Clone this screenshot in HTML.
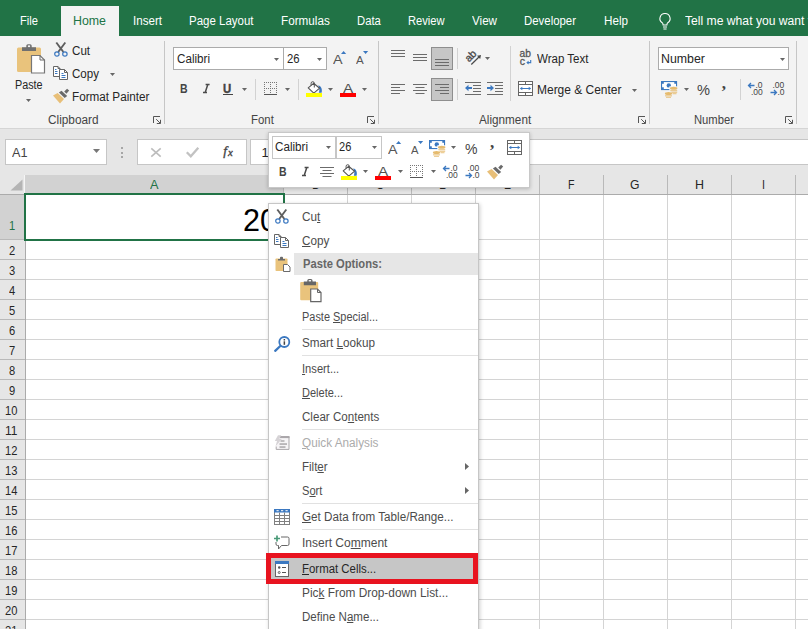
<!DOCTYPE html>
<html><head><meta charset="utf-8">
<style>
*{box-sizing:border-box;margin:0;padding:0}
html,body{width:808px;height:629px;overflow:hidden;background:#fff}
body{font-family:"Liberation Sans",sans-serif;font-size:12px;color:#262626;position:relative}
.a{position:absolute}
.t{position:absolute;white-space:nowrap;line-height:16px;height:16px;transform-origin:0 50%}
u{text-decoration:underline;text-underline-offset:0.600px;text-decoration-thickness:1px}
svg{overflow:visible}
</style></head><body>
<div class="a" style="left:0px;top:0px;width:808px;height:36px;background:#217346;"></div>
<div class="a" style="left:61px;top:6px;width:58px;height:30px;background:#f3f3f3;"></div>
<div class="t" style="left:20.0px;top:12.87px;font-size:12.5px;color:#fff;transform:scaleX(0.8930);">File</div>
<div class="t" style="left:73.0px;top:12.87px;font-size:12.5px;color:#217346;transform:scaleX(0.9897);">Home</div>
<div class="t" style="left:132.8px;top:12.87px;font-size:12.5px;color:#fff;transform:scaleX(0.9275);">Insert</div>
<div class="t" style="left:189.0px;top:12.87px;font-size:12.5px;color:#fff;transform:scaleX(0.9188);">Page Layout</div>
<div class="t" style="left:281.0px;top:12.87px;font-size:12.5px;color:#fff;transform:scaleX(0.9368);">Formulas</div>
<div class="t" style="left:356.8px;top:12.87px;font-size:12.5px;color:#fff;transform:scaleX(0.9013);">Data</div>
<div class="t" style="left:407.8px;top:12.87px;font-size:12.5px;color:#fff;transform:scaleX(0.8927);">Review</div>
<div class="t" style="left:471.5px;top:12.87px;font-size:12.5px;color:#fff;transform:scaleX(0.9302);">View</div>
<div class="t" style="left:524.0px;top:12.87px;font-size:12.5px;color:#fff;transform:scaleX(0.9125);">Developer</div>
<div class="t" style="left:604.0px;top:12.87px;font-size:12.5px;color:#fff;transform:scaleX(0.9332);">Help</div>
<div class="t" style="left:684.5px;top:12.87px;font-size:12.5px;color:#fff;transform:scaleX(0.9717);">Tell me what you want to</div>
<svg class="a" style="left:657px;top:12px" width="16" height="19" viewBox="0 0 16 19"><path d="M8 1.500a5 5 0 0 0-2.800 9.200c.7.600.9 1.400.9 2.300h3.800c0-.9.200-1.700.9-2.300A5 5 0 0 0 8 1.500zM6 15h4M6.400 17h3.200" fill="none" stroke="#fff" stroke-width="1.100"/></svg>
<div class="a" style="left:0px;top:36px;width:808px;height:92px;background:#f3f3f3;"></div>
<div class="a" style="left:0px;top:128px;width:808px;height:1px;background:#d5d5d5;"></div>
<div class="a" style="left:164px;top:41px;width:1px;height:83px;background:#c6c6c6;"></div>
<div class="a" style="left:378px;top:41px;width:1px;height:83px;background:#c6c6c6;"></div>
<div class="a" style="left:649px;top:41px;width:1px;height:83px;background:#c6c6c6;"></div>
<div class="a" style="left:796px;top:41px;width:1px;height:83px;background:#c6c6c6;"></div>
<svg class="a" style="left:16px;top:43px" width="30" height="32" viewBox="0 0 30 32"><rect x="1" y="4.500" width="24" height="24.500" rx="1.500" fill="#e9c37c"/><path d="M6 8V4.200h4.300V2.800a1.600 1.600 0 0 1 1.600-1.600h2.200a1.600 1.600 0 0 1 1.600 1.600V4.200H20V8z" fill="#707070"/><rect x="11.900" y="2.400" width="2.200" height="1.700" fill="#f3f3f3"/><path d="M15.500 12.500h8.500l4.500 4.500v13h-13z" fill="#fff" stroke="#777" stroke-width="1.200"/><path d="M24 12.500v4.500h4.500" fill="none" stroke="#6b6b6b" stroke-width="1"/></svg>
<div class="t" style="left:15.2px;top:77.04px;font-size:12px;color:#262626;transform:scaleX(0.8994);">Paste</div>
<svg class="a" style="left:26px;top:99px" width="5" height="3" viewBox="0 0 5 3"><path d="M0 0h5L2.500 3z" fill="#666"/></svg>
<svg class="a" style="left:53px;top:42px" width="16" height="16" viewBox="0 0 16 16"><path d="M3.300 0.500L10.400 10M12.300 0.500L5.200 10" stroke="#5e5e5e" stroke-width="1.900" fill="none" stroke-linecap="butt"/><circle cx="3.900" cy="12" r="2.200" fill="none" stroke="#3b78c0" stroke-width="1.200"/><circle cx="11.900" cy="12" r="2.200" fill="none" stroke="#3b78c0" stroke-width="1.200"/></svg>
<div class="t" style="left:72.2px;top:43.04px;font-size:12px;color:#262626;transform:scaleX(0.9686);">Cut</div>
<svg class="a" style="left:53px;top:66px" width="16" height="15" viewBox="0 0 16 15"><path d="M0.500 0.500h4.500l2 2v8h-6.500z" fill="#fff" stroke="#666" stroke-width="1"/><path d="M5 0.500v2h2" fill="none" stroke="#666" stroke-width="1"/><path d="M2 3.500h1.500M2 5.500h2.500M2 7.500h2.500" stroke="#3b78c0" stroke-width="1"/><path d="M6.500 3.500h5l3 3v7h-8z" fill="#fff" stroke="#666" stroke-width="1"/><path d="M11.500 3.500v3h3" fill="none" stroke="#666" stroke-width="1"/><path d="M8.500 7.500h2M8.500 9.500h4M8.500 11.500h4" stroke="#3b78c0" stroke-width="1"/></svg>
<div class="t" style="left:72.2px;top:66.04px;font-size:12px;color:#262626;transform:scaleX(0.9637);">Copy</div>
<svg class="a" style="left:110px;top:72.5px" width="5" height="3" viewBox="0 0 5 3"><path d="M0 0h5L2.500 3z" fill="#666"/></svg>
<svg class="a" style="left:53px;top:87.7px" width="17" height="16" viewBox="0 0 17 16"><path d="M0 7.400L4.600 5.100 11 11 7 15.400z" fill="#e8bf78"/><path d="M5.900 4.400L8.500 2.700 14.200 7.900 11.700 10.100z" fill="#6a6a6a"/><path d="M11.200 3.500L14.100 0.800 16.200 2.600 13.400 5.700z" fill="#6a6a6a"/></svg>
<div class="t" style="left:72.2px;top:89.04px;font-size:12px;color:#262626;transform:scaleX(0.9766);">Format Painter</div>
<div class="t" style="left:48.2px;top:112.04px;font-size:12px;color:#444;transform:scaleX(0.9830);">Clipboard</div>
<svg class="a" style="left:153px;top:116px" width="8" height="8" viewBox="0 0 8 8"><path d="M0.500 7V0.500H7M3.200 3.200l4 4M7.500 3.800v3.700h-3.700" fill="none" stroke="#555" stroke-width="1"/></svg>
<div class="a" style="left:173px;top:47px;width:111px;height:23px;background:#fff;border:1px solid #ababab"></div>
<div class="a" style="left:283px;top:47px;width:44px;height:23px;background:#fff;border:1px solid #ababab"></div>
<div class="t" style="left:176.5px;top:51.04px;font-size:12px;color:#262626;transform:scaleX(0.9701);">Calibri</div>
<svg class="a" style="left:274px;top:58px" width="5" height="3" viewBox="0 0 5 3"><path d="M0 0h5L2.500 3z" fill="#666"/></svg>
<div class="t" style="left:286.5px;top:51.04px;font-size:12px;color:#262626;transform:scaleX(0.9432);">26</div>
<svg class="a" style="left:317px;top:58px" width="5" height="3" viewBox="0 0 5 3"><path d="M0 0h5L2.500 3z" fill="#666"/></svg>
<div class="t" style="left:332.7px;top:51.52px;font-size:13.5px;color:#555;transform:scaleX(1.0648);">A</div>
<svg class="a" style="left:341px;top:50.7px" width="5.2" height="3.1" viewBox="0 0 5.2 3.1"><path d="M0 3.100h5.200L2.600 0z" fill="#3b78c0"/></svg>
<div class="t" style="left:355.7px;top:52.02px;font-size:11.2px;color:#555;transform:scaleX(1.0310);">A</div>
<svg class="a" style="left:362.8px;top:51px" width="5.2" height="3.1" viewBox="0 0 5.2 3.1"><path d="M0 0h5.200L2.600 3.100z" fill="#3b78c0"/></svg>
<div class="t" style="left:179.5px;top:80.87px;font-size:12.5px;color:#444;transform:scaleX(0.8415);font-weight:bold;">B</div>
<svg class="a" style="left:201.5px;top:84px" width="8" height="9" viewBox="0 0 8 9"><path d="M5.800 0.600L3.200 8.400M3.600 0.600h4M1 8.400h4" fill="none" stroke="#4a4a4a" stroke-width="1.500"/></svg>
<div class="t" style="left:223.2px;top:81.04px;font-size:12px;color:#444;transform:scaleX(0.9456);font-weight:bold;-webkit-text-stroke:0.4px #444;">U</div>
<div class="a" style="left:223px;top:94px;width:10px;height:1px;background:#444;"></div>
<svg class="a" style="left:242px;top:88px" width="5" height="3" viewBox="0 0 5 3"><path d="M0 0h5L2.500 3z" fill="#666"/></svg>
<div class="a" style="left:255px;top:79px;width:1px;height:21px;background:#d2d2d2;"></div>
<svg class="a" style="left:264px;top:82px" width="13" height="13" viewBox="0 0 13 13"><g fill="#777"><rect x="0" y="0" width="1" height="1"/><rect x="0" y="12" width="1" height="1"/><rect x="0" y="0" width="1" height="1"/><rect x="12" y="0" width="1" height="1"/><rect x="6" y="0" width="1" height="1"/><rect x="0" y="6" width="1" height="1"/><rect x="2" y="0" width="1" height="1"/><rect x="2" y="12" width="1" height="1"/><rect x="0" y="2" width="1" height="1"/><rect x="12" y="2" width="1" height="1"/><rect x="6" y="2" width="1" height="1"/><rect x="2" y="6" width="1" height="1"/><rect x="4" y="0" width="1" height="1"/><rect x="4" y="12" width="1" height="1"/><rect x="0" y="4" width="1" height="1"/><rect x="12" y="4" width="1" height="1"/><rect x="6" y="4" width="1" height="1"/><rect x="4" y="6" width="1" height="1"/><rect x="6" y="0" width="1" height="1"/><rect x="6" y="12" width="1" height="1"/><rect x="0" y="6" width="1" height="1"/><rect x="12" y="6" width="1" height="1"/><rect x="6" y="6" width="1" height="1"/><rect x="6" y="6" width="1" height="1"/><rect x="8" y="0" width="1" height="1"/><rect x="8" y="12" width="1" height="1"/><rect x="0" y="8" width="1" height="1"/><rect x="12" y="8" width="1" height="1"/><rect x="6" y="8" width="1" height="1"/><rect x="8" y="6" width="1" height="1"/><rect x="10" y="0" width="1" height="1"/><rect x="10" y="12" width="1" height="1"/><rect x="0" y="10" width="1" height="1"/><rect x="12" y="10" width="1" height="1"/><rect x="6" y="10" width="1" height="1"/><rect x="10" y="6" width="1" height="1"/><rect x="12" y="0" width="1" height="1"/><rect x="12" y="12" width="1" height="1"/><rect x="0" y="12" width="1" height="1"/><rect x="12" y="12" width="1" height="1"/><rect x="6" y="12" width="1" height="1"/><rect x="12" y="6" width="1" height="1"/></g><rect x="0" y="12" width="13" height="1" fill="#555"/></svg>
<svg class="a" style="left:285px;top:88px" width="5" height="3" viewBox="0 0 5 3"><path d="M0 0h5L2.500 3z" fill="#666"/></svg>
<div class="a" style="left:298px;top:79px;width:1px;height:21px;background:#d2d2d2;"></div>
<svg class="a" style="left:306px;top:81px" width="17" height="16" viewBox="0 0 17 16"><path d="M12.300 4.200c2.800.8 4.300 3.800 3.300 7.600h-2.800c1-2.500.6-5-.5-7.600z" fill="#3b78c0"/><path d="M7.600 2.300L2.200 6.900l5.600 5.300 5.800-5z" fill="#fff" stroke="#555" stroke-width="1.100" stroke-linejoin="round"/><path d="M8.300 6.500V2.300a1.600 1.600 0 0 0-3.200 0v2" fill="none" stroke="#555" stroke-width="1"/><rect x="0" y="12" width="16" height="4" fill="#ffff00"/></svg>
<svg class="a" style="left:328px;top:88px" width="5" height="3" viewBox="0 0 5 3"><path d="M0 0h5L2.500 3z" fill="#666"/></svg>
<svg class="a" style="left:340px;top:83px" width="16" height="14" viewBox="0 0 16 14"><rect x="0" y="10" width="16" height="4" fill="#f00"/></svg>
<div class="t" style="left:342.9px;top:80.52px;font-size:13.5px;color:#505050;transform:scaleX(1.1314);">A</div>
<svg class="a" style="left:362px;top:88px" width="5" height="3" viewBox="0 0 5 3"><path d="M0 0h5L2.500 3z" fill="#666"/></svg>
<div class="t" style="left:251.0px;top:112.04px;font-size:12px;color:#444;transform:scaleX(0.9494);">Font</div>
<svg class="a" style="left:367px;top:116px" width="8" height="8" viewBox="0 0 8 8"><path d="M0.500 7V0.500H7M3.200 3.200l4 4M7.500 3.800v3.700h-3.700" fill="none" stroke="#555" stroke-width="1"/></svg>
<svg class="a" style="left:391px;top:50px" width="14" height="9" viewBox="0 0 14 9"><g fill="#6b6b6b"><rect x="0" y="0" width="14" height="1"/><rect x="0" y="3" width="14" height="1"/><rect x="0" y="6" width="14" height="1"/></g></svg>
<svg class="a" style="left:413px;top:54px" width="14" height="9" viewBox="0 0 14 9"><g fill="#6b6b6b"><rect x="0" y="0" width="14" height="1"/><rect x="0" y="3" width="14" height="1"/><rect x="0" y="6" width="14" height="1"/></g></svg>
<div class="a" style="left:431px;top:47px;width:22px;height:23px;background:#c6c6c6;border:1px solid #8e8e8e"></div>
<svg class="a" style="left:435px;top:59px" width="14" height="9" viewBox="0 0 14 9"><g fill="#6b6b6b"><rect x="0" y="0" width="14" height="1"/><rect x="0" y="3" width="14" height="1"/><rect x="0" y="6" width="14" height="1"/></g></svg>
<div class="a" style="left:457px;top:48px;width:1px;height:21px;background:#d2d2d2;"></div>
<svg class="a" style="left:465px;top:49px" width="17" height="17" viewBox="0 0 17 17"><text x="5.500" y="10.500" font-size="10.500" font-family="Liberation Sans" fill="#4a4a4a" stroke="#4a4a4a" stroke-width=".35" text-anchor="middle" transform="rotate(-45 5.500 6.900)">ab</text><path d="M6.300 15.500L14.500 7.500" fill="none" stroke="#4a4a4a" stroke-width="1.200"/><path d="M16 6l-4 .8 3.200 3.200z" fill="#4a4a4a"/></svg>
<svg class="a" style="left:485px;top:57px" width="5" height="3" viewBox="0 0 5 3"><path d="M0 0h5L2.500 3z" fill="#666"/></svg>
<div class="a" style="left:510px;top:46px;width:1px;height:55px;background:#d2d2d2;"></div>
<svg class="a" style="left:391px;top:84px" width="14" height="12" viewBox="0 0 14 12"><g fill="#6b6b6b"><rect x="0" y="0" width="14" height="1"/><rect x="0" y="3" width="9" height="1"/><rect x="0" y="6" width="14" height="1"/><rect x="0" y="9" width="9" height="1"/></g></svg>
<svg class="a" style="left:413px;top:84px" width="14" height="12" viewBox="0 0 14 12"><g fill="#6b6b6b"><rect x="0" y="0" width="14" height="1"/><rect x="2.5" y="3" width="9" height="1"/><rect x="0" y="6" width="14" height="1"/><rect x="2.5" y="9" width="9" height="1"/></g></svg>
<div class="a" style="left:431px;top:78px;width:22px;height:23px;background:#c6c6c6;border:1px solid #8e8e8e"></div>
<svg class="a" style="left:435px;top:84px" width="14" height="12" viewBox="0 0 14 12"><g fill="#6b6b6b"><rect x="0" y="0" width="14" height="1"/><rect x="5" y="3" width="9" height="1"/><rect x="0" y="6" width="14" height="1"/><rect x="5" y="9" width="9" height="1"/></g></svg>
<div class="a" style="left:457px;top:79px;width:1px;height:21px;background:#d2d2d2;"></div>
<svg class="a" style="left:465px;top:82px" width="16" height="13" viewBox="0 0 16 13"><g fill="#6b6b6b"><rect x="0" y="0" width="16" height="1"/><rect x="0" y="12" width="16" height="1"/><rect x="8" y="3" width="8" height="1"/><rect x="8" y="6" width="8" height="1"/><rect x="8" y="9" width="8" height="1"/></g><path d="M0 6L3.500 2.800V5H7V7H3.500V9.200z" fill="#3b78c0"/></svg>
<svg class="a" style="left:487px;top:82px" width="16" height="13" viewBox="0 0 16 13"><g fill="#6b6b6b"><rect x="0" y="0" width="16" height="1"/><rect x="0" y="12" width="16" height="1"/><rect x="8" y="3" width="8" height="1"/><rect x="8" y="6" width="8" height="1"/><rect x="8" y="9" width="8" height="1"/></g><path d="M7 6L3.500 2.800V5H0V7H3.500V9.200z" fill="#3b78c0"/></svg>
<svg class="a" style="left:519px;top:50px" width="14" height="16" viewBox="0 0 14 16"><text x="0.600" y="7.400" font-size="10.500" font-family="Liberation Sans" fill="#555" stroke="#555" stroke-width=".3" textLength="11.400" lengthAdjust="spacingAndGlyphs">ab</text><text x="0.700" y="14.700" font-size="10.500" font-family="Liberation Sans" fill="#555" stroke="#555" stroke-width=".3">c</text><path d="M11.700 10v2.600H8" fill="none" stroke="#3b78c0" stroke-width="1.100"/><path d="M7.300 12.600L9.600 10.800V14.400z" fill="#3b78c0"/></svg>
<div class="t" style="left:537.0px;top:51.04px;font-size:12px;color:#262626;transform:scaleX(0.9612);">Wrap Text</div>
<svg class="a" style="left:518px;top:81px" width="15" height="15" viewBox="0 0 15 15"><rect x="0.500" y="0.500" width="14" height="14" fill="#fff" stroke="#666"/><path d="M0.500 3.500h14M0.500 11.500h14M7.500 0.500v3M7.500 11.500v3" stroke="#666" fill="none"/><path d="M3 7.500h9" fill="none" stroke="#3b78c0" stroke-width="1"/><path d="M1.800 7.500L4.300 5.700V9.300zM13.200 7.500L10.700 5.700V9.300z" fill="#3b78c0"/></svg>
<div class="t" style="left:537.0px;top:82.04px;font-size:12px;color:#262626;transform:scaleX(0.9976);">Merge &amp; Center</div>
<svg class="a" style="left:632px;top:88.5px" width="5" height="3" viewBox="0 0 5 3"><path d="M0 0h5L2.500 3z" fill="#666"/></svg>
<div class="t" style="left:478.8px;top:112.04px;font-size:12px;color:#444;transform:scaleX(0.9780);">Alignment</div>
<svg class="a" style="left:638px;top:116px" width="8" height="8" viewBox="0 0 8 8"><path d="M0.500 7V0.500H7M3.200 3.200l4 4M7.500 3.800v3.700h-3.700" fill="none" stroke="#555" stroke-width="1"/></svg>
<div class="a" style="left:658px;top:47px;width:131px;height:23px;background:#fff;border:1px solid #ababab"></div>
<div class="t" style="left:661.0px;top:51.04px;font-size:12px;color:#262626;transform:scaleX(1.0307);">Number</div>
<svg class="a" style="left:779.5px;top:57.5px" width="5" height="3" viewBox="0 0 5 3"><path d="M0 0h5L2.500 3z" fill="#666"/></svg>
<svg class="a" style="left:661px;top:81.2px" width="17" height="17" viewBox="0 0 17 17"><rect x="0.550" y="0.550" width="15" height="8" fill="#fff" stroke="#3b78c0" stroke-width="1.100"/><g fill="#3b78c0"><rect x="1" y="1" width="1.800" height="1.800"/><rect x="13.300" y="1" width="1.800" height="1.800"/><rect x="1" y="6.300" width="1.800" height="1.800"/><circle cx="7.800" cy="4.400" r="2.200"/></g><rect x="8.300" y="5.300" width="9" height="4.500" fill="#f3f3f3"/><g fill="#e6bb6e"><ellipse cx="12.700" cy="7.300" rx="3.700" ry="1.500"/><rect x="9.300" y="9.300" width="6.900" height=".9"/><rect x="10.500" y="10.800" width="5.700" height=".9"/><rect x="11.500" y="12.300" width="4" height=".9"/><ellipse cx="7.500" cy="12.400" rx="3.600" ry="1.500"/><rect x="4" y="14.400" width="7" height=".9"/><rect x="5" y="15.800" width="5" height=".9"/></g></svg>
<svg class="a" style="left:683.5px;top:88px" width="5" height="3" viewBox="0 0 5 3"><path d="M0 0h5L2.500 3z" fill="#666"/></svg>
<div class="t" style="left:696.5px;top:82.00px;font-size:15px;color:#444;transform:scaleX(0.9742);">%</div>
<div class="t" style="left:721.8px;top:76.31px;font-size:17px;color:#444;font-weight:bold;font-family:'Liberation Serif',sans-serif;">,</div>
<div class="a" style="left:740px;top:79px;width:1px;height:21px;background:#d2d2d2;"></div>
<svg class="a" style="left:748px;top:82px" width="15" height="13" viewBox="0 0 15 13"><path d="M0.500 3.500h6M3 1L0.500 3.500 3 6" fill="none" stroke="#3b78c0" stroke-width="1.300"/><text x="7.500" y="6" font-size="8.500" font-family="Liberation Sans" fill="#444">.0</text><text x="3" y="13.300" font-size="8.500" font-family="Liberation Sans" fill="#444">.00</text></svg>
<svg class="a" style="left:770px;top:82px" width="15" height="13" viewBox="0 0 15 13"><text x="2.500" y="6" font-size="8.500" font-family="Liberation Sans" fill="#444">.00</text><path d="M0.500 10.500h6M4 8l2.500 2.500L4 13" fill="none" stroke="#3b78c0" stroke-width="1.300"/><text x="7.500" y="13.300" font-size="8.500" font-family="Liberation Sans" fill="#444">.0</text></svg>
<div class="t" style="left:694.2px;top:112.04px;font-size:12px;color:#444;transform:scaleX(0.9370);">Number</div>
<svg class="a" style="left:785px;top:116px" width="8" height="8" viewBox="0 0 8 8"><path d="M0.500 7V0.500H7M3.200 3.200l4 4M7.500 3.800v3.700h-3.700" fill="none" stroke="#555" stroke-width="1"/></svg>
<div class="a" style="left:0px;top:129px;width:808px;height:46px;background:#e6e6e6;"></div>
<div class="a" style="left:5px;top:139px;width:102px;height:26px;background:#fff;border:1px solid #c6c6c6"></div>
<div class="t" style="left:11.8px;top:144.70px;font-size:13px;color:#444;transform:scaleX(0.9745);">A1</div>
<svg class="a" style="left:93px;top:149px" width="7" height="4" viewBox="0 0 7 4"><path d="M0 0h7L3.500 4z" fill="#777"/></svg>
<div class="a" style="left:121px;top:147px;width:2px;height:2px;background:#a6a6a6;"></div>
<div class="a" style="left:121px;top:151.5px;width:2px;height:2px;background:#a6a6a6;"></div>
<div class="a" style="left:121px;top:156px;width:2px;height:2px;background:#a6a6a6;"></div>
<div class="a" style="left:137px;top:139px;width:110px;height:26px;background:#fff;border:1px solid #c6c6c6"></div>
<svg class="a" style="left:151px;top:147.5px" width="10" height="9" viewBox="0 0 10 9"><path d="M0.300 0.300l9.400 8.400M9.700 0.300l-9.400 8.400" stroke="#bcbcbc" stroke-width="1.600" fill="none"/></svg>
<svg class="a" style="left:186px;top:147px" width="13" height="10" viewBox="0 0 13 10"><path d="M0.800 5.300l4 4L12.300 0.800" stroke="#c2c2c2" stroke-width="2.300" fill="none"/></svg>
<div class="t" style="left:223.3px;top:142.52px;font-size:13.5px;color:#444;font-style:italic;-webkit-text-stroke:0.35px #444;font-family:'Liberation Serif',sans-serif;">f</div>
<div class="t" style="left:228.0px;top:144.29px;font-size:10.7px;color:#444;font-style:italic;-webkit-text-stroke:0.35px #444;font-family:'Liberation Serif',sans-serif;">x</div>
<div class="a" style="left:250px;top:139px;width:560px;height:26px;background:#fff;border:1px solid #c6c6c6"></div>
<div class="t" style="left:261.5px;top:144.70px;font-size:13px;color:#262626;">1</div>
<div class="a" style="left:0px;top:175px;width:808px;height:454px;background:#fff;"></div>
<div class="a" style="left:0px;top:175px;width:808px;height:19px;background:#e6e6e6;"></div>
<div class="a" style="left:0px;top:194px;width:808px;height:1px;background:#ababab;"></div>
<svg class="a" style="left:10px;top:179px" width="13" height="12" viewBox="0 0 13 12"><path d="M12.500 0.500V11.500H0.500z" fill="#b4b4b4"/></svg>
<div class="a" style="left:24px;top:175px;width:1px;height:19px;background:#f5f5f5;"></div>
<div class="a" style="left:25px;top:175px;width:258px;height:19px;background:#d2d2d2;"></div>
<div class="t" style="left:149.5px;top:176.70px;font-size:13px;color:#217346;transform:scaleX(0.9802);">A</div>
<div class="a" style="left:283px;top:175px;width:1px;height:19px;background:#b9b9b9;"></div>
<div class="a" style="left:283px;top:195px;width:1px;height:440px;background:#d4d4d4;"></div>
<div class="a" style="left:347px;top:175px;width:1px;height:19px;background:#b9b9b9;"></div>
<div class="a" style="left:347px;top:195px;width:1px;height:440px;background:#d4d4d4;"></div>
<div class="a" style="left:411px;top:175px;width:1px;height:19px;background:#b9b9b9;"></div>
<div class="a" style="left:411px;top:195px;width:1px;height:440px;background:#d4d4d4;"></div>
<div class="a" style="left:475px;top:175px;width:1px;height:19px;background:#b9b9b9;"></div>
<div class="a" style="left:475px;top:195px;width:1px;height:440px;background:#d4d4d4;"></div>
<div class="a" style="left:539px;top:175px;width:1px;height:19px;background:#b9b9b9;"></div>
<div class="a" style="left:539px;top:195px;width:1px;height:440px;background:#d4d4d4;"></div>
<div class="a" style="left:603px;top:175px;width:1px;height:19px;background:#b9b9b9;"></div>
<div class="a" style="left:603px;top:195px;width:1px;height:440px;background:#d4d4d4;"></div>
<div class="a" style="left:667px;top:175px;width:1px;height:19px;background:#b9b9b9;"></div>
<div class="a" style="left:667px;top:195px;width:1px;height:440px;background:#d4d4d4;"></div>
<div class="a" style="left:731px;top:175px;width:1px;height:19px;background:#b9b9b9;"></div>
<div class="a" style="left:731px;top:195px;width:1px;height:440px;background:#d4d4d4;"></div>
<div class="a" style="left:795px;top:175px;width:1px;height:19px;background:#b9b9b9;"></div>
<div class="a" style="left:795px;top:195px;width:1px;height:440px;background:#d4d4d4;"></div>
<div class="t" style="left:311.5px;top:176.70px;font-size:13px;color:#262626;transform:scaleX(0.8649);">B</div>
<div class="t" style="left:375.5px;top:176.70px;font-size:13px;color:#262626;transform:scaleX(0.8519);">C</div>
<div class="t" style="left:439.0px;top:176.70px;font-size:13px;color:#262626;transform:scaleX(0.9584);">D</div>
<div class="t" style="left:504.0px;top:176.70px;font-size:13px;color:#262626;transform:scaleX(0.8072);">E</div>
<div class="t" style="left:568.0px;top:176.70px;font-size:13px;color:#262626;transform:scaleX(0.8173);">F</div>
<div class="t" style="left:630.0px;top:176.70px;font-size:13px;color:#262626;transform:scaleX(0.9383);">G</div>
<div class="t" style="left:694.5px;top:176.70px;font-size:13px;color:#262626;transform:scaleX(0.9584);">H</div>
<div class="t" style="left:761.5px;top:176.70px;font-size:13px;color:#262626;transform:scaleX(0.8276);">I</div>
<div class="a" style="left:0px;top:195px;width:25px;height:440px;background:#e6e6e6;"></div>
<div class="a" style="left:25px;top:195px;width:1px;height:440px;background:#ababab;"></div>
<div class="a" style="left:0px;top:195px;width:25px;height:45px;background:#d2d2d2;"></div>
<div class="t" style="left:9.0px;top:217.70px;font-size:13px;color:#217346;transform:scaleX(0.8570);">1</div>
<div class="a" style="left:0px;top:239px;width:25px;height:1px;background:#b9b9b9;"></div>
<div class="a" style="left:26px;top:239px;width:790px;height:1px;background:#d4d4d4;"></div>
<div class="t" style="left:9.0px;top:242.90px;font-size:13px;color:#262626;transform:scaleX(0.8570);">2</div>
<div class="a" style="left:0px;top:259px;width:25px;height:1px;background:#b9b9b9;"></div>
<div class="a" style="left:26px;top:259px;width:790px;height:1px;background:#d4d4d4;"></div>
<div class="t" style="left:9.0px;top:262.90px;font-size:13px;color:#262626;transform:scaleX(0.8570);">3</div>
<div class="a" style="left:0px;top:279px;width:25px;height:1px;background:#b9b9b9;"></div>
<div class="a" style="left:26px;top:279px;width:790px;height:1px;background:#d4d4d4;"></div>
<div class="t" style="left:9.0px;top:282.90px;font-size:13px;color:#262626;transform:scaleX(0.8570);">4</div>
<div class="a" style="left:0px;top:299px;width:25px;height:1px;background:#b9b9b9;"></div>
<div class="a" style="left:26px;top:299px;width:790px;height:1px;background:#d4d4d4;"></div>
<div class="t" style="left:9.0px;top:302.90px;font-size:13px;color:#262626;transform:scaleX(0.8570);">5</div>
<div class="a" style="left:0px;top:319px;width:25px;height:1px;background:#b9b9b9;"></div>
<div class="a" style="left:26px;top:319px;width:790px;height:1px;background:#d4d4d4;"></div>
<div class="t" style="left:9.0px;top:322.90px;font-size:13px;color:#262626;transform:scaleX(0.8570);">6</div>
<div class="a" style="left:0px;top:339px;width:25px;height:1px;background:#b9b9b9;"></div>
<div class="a" style="left:26px;top:339px;width:790px;height:1px;background:#d4d4d4;"></div>
<div class="t" style="left:9.0px;top:342.90px;font-size:13px;color:#262626;transform:scaleX(0.8570);">7</div>
<div class="a" style="left:0px;top:359px;width:25px;height:1px;background:#b9b9b9;"></div>
<div class="a" style="left:26px;top:359px;width:790px;height:1px;background:#d4d4d4;"></div>
<div class="t" style="left:9.0px;top:362.90px;font-size:13px;color:#262626;transform:scaleX(0.8570);">8</div>
<div class="a" style="left:0px;top:379px;width:25px;height:1px;background:#b9b9b9;"></div>
<div class="a" style="left:26px;top:379px;width:790px;height:1px;background:#d4d4d4;"></div>
<div class="t" style="left:9.0px;top:382.90px;font-size:13px;color:#262626;transform:scaleX(0.8570);">9</div>
<div class="a" style="left:0px;top:399px;width:25px;height:1px;background:#b9b9b9;"></div>
<div class="a" style="left:26px;top:399px;width:790px;height:1px;background:#d4d4d4;"></div>
<div class="t" style="left:5.0px;top:402.90px;font-size:13px;color:#262626;transform:scaleX(0.8570);">10</div>
<div class="a" style="left:0px;top:419px;width:25px;height:1px;background:#b9b9b9;"></div>
<div class="a" style="left:26px;top:419px;width:790px;height:1px;background:#d4d4d4;"></div>
<div class="t" style="left:5.0px;top:422.90px;font-size:13px;color:#262626;transform:scaleX(0.9185);">11</div>
<div class="a" style="left:0px;top:439px;width:25px;height:1px;background:#b9b9b9;"></div>
<div class="a" style="left:26px;top:439px;width:790px;height:1px;background:#d4d4d4;"></div>
<div class="t" style="left:5.0px;top:442.90px;font-size:13px;color:#262626;transform:scaleX(0.8570);">12</div>
<div class="a" style="left:0px;top:459px;width:25px;height:1px;background:#b9b9b9;"></div>
<div class="a" style="left:26px;top:459px;width:790px;height:1px;background:#d4d4d4;"></div>
<div class="t" style="left:5.0px;top:462.90px;font-size:13px;color:#262626;transform:scaleX(0.8570);">13</div>
<div class="a" style="left:0px;top:479px;width:25px;height:1px;background:#b9b9b9;"></div>
<div class="a" style="left:26px;top:479px;width:790px;height:1px;background:#d4d4d4;"></div>
<div class="t" style="left:5.0px;top:482.90px;font-size:13px;color:#262626;transform:scaleX(0.8570);">14</div>
<div class="a" style="left:0px;top:499px;width:25px;height:1px;background:#b9b9b9;"></div>
<div class="a" style="left:26px;top:499px;width:790px;height:1px;background:#d4d4d4;"></div>
<div class="t" style="left:5.0px;top:502.90px;font-size:13px;color:#262626;transform:scaleX(0.8570);">15</div>
<div class="a" style="left:0px;top:519px;width:25px;height:1px;background:#b9b9b9;"></div>
<div class="a" style="left:26px;top:519px;width:790px;height:1px;background:#d4d4d4;"></div>
<div class="t" style="left:5.0px;top:522.90px;font-size:13px;color:#262626;transform:scaleX(0.8570);">16</div>
<div class="a" style="left:0px;top:539px;width:25px;height:1px;background:#b9b9b9;"></div>
<div class="a" style="left:26px;top:539px;width:790px;height:1px;background:#d4d4d4;"></div>
<div class="t" style="left:5.0px;top:542.90px;font-size:13px;color:#262626;transform:scaleX(0.8570);">17</div>
<div class="a" style="left:0px;top:559px;width:25px;height:1px;background:#b9b9b9;"></div>
<div class="a" style="left:26px;top:559px;width:790px;height:1px;background:#d4d4d4;"></div>
<div class="t" style="left:5.0px;top:562.90px;font-size:13px;color:#262626;transform:scaleX(0.8570);">18</div>
<div class="a" style="left:0px;top:579px;width:25px;height:1px;background:#b9b9b9;"></div>
<div class="a" style="left:26px;top:579px;width:790px;height:1px;background:#d4d4d4;"></div>
<div class="t" style="left:5.0px;top:582.90px;font-size:13px;color:#262626;transform:scaleX(0.8570);">19</div>
<div class="a" style="left:0px;top:599px;width:25px;height:1px;background:#b9b9b9;"></div>
<div class="a" style="left:26px;top:599px;width:790px;height:1px;background:#d4d4d4;"></div>
<div class="t" style="left:5.0px;top:602.90px;font-size:13px;color:#262626;transform:scaleX(0.8570);">20</div>
<div class="a" style="left:0px;top:619px;width:25px;height:1px;background:#b9b9b9;"></div>
<div class="a" style="left:26px;top:619px;width:790px;height:1px;background:#d4d4d4;"></div>
<div class="t" style="left:5.0px;top:622.90px;font-size:13px;color:#262626;transform:scaleX(0.8570);">21</div>
<div class="a" style="left:0px;top:639px;width:25px;height:1px;background:#b9b9b9;"></div>
<div class="a" style="left:26px;top:639px;width:790px;height:1px;background:#d4d4d4;"></div>
<div class="t" style="left:5.0px;top:642.90px;font-size:13px;color:#262626;transform:scaleX(0.8570);">22</div>
<div class="a" style="left:24px;top:193px;width:261px;height:48px;border:2px solid #217346;background:#fff"></div>
<div class="t" style="left:242.8px;top:211.63px;font-size:30.5px;color:#000;transform:scaleX(1.0018);">20</div>
<div class="a" style="left:268px;top:132px;width:262px;height:56px;background:#fff;border:1px solid #c8c8c8;box-shadow:0 1px 4px rgba(0,0,0,.22)"></div>
<div class="a" style="left:272px;top:136px;width:64px;height:23px;background:#fff;border:1px solid #c6c6c6"></div>
<div class="a" style="left:336px;top:136px;width:46px;height:23px;background:#fff;border:1px solid #c6c6c6"></div>
<div class="t" style="left:275.3px;top:139.04px;font-size:12px;color:#262626;transform:scaleX(0.9701);">Calibri</div>
<svg class="a" style="left:326px;top:146px" width="5" height="3" viewBox="0 0 5 3"><path d="M0 0h5L2.500 3z" fill="#666"/></svg>
<div class="t" style="left:338.5px;top:139.04px;font-size:12px;color:#262626;transform:scaleX(0.9207);">26</div>
<svg class="a" style="left:372px;top:146px" width="5" height="3" viewBox="0 0 5 3"><path d="M0 0h5L2.500 3z" fill="#666"/></svg>
<div class="t" style="left:388.0px;top:141.52px;font-size:13.5px;color:#555;transform:scaleX(1.0537);">A</div>
<svg class="a" style="left:396.3px;top:140.7px" width="5.2" height="3.1" viewBox="0 0 5.2 3.1"><path d="M0 3.100h5.200L2.600 0z" fill="#3b78c0"/></svg>
<div class="t" style="left:410.8px;top:142.02px;font-size:11.2px;color:#555;transform:scaleX(1.0042);">A</div>
<svg class="a" style="left:418px;top:141px" width="5.2" height="3.1" viewBox="0 0 5.2 3.1"><path d="M0 0h5.200L2.600 3.100z" fill="#3b78c0"/></svg>
<svg class="a" style="left:429px;top:139.7px" width="17" height="17" viewBox="0 0 17 17"><rect x="0.550" y="0.550" width="15" height="8" fill="#fff" stroke="#3b78c0" stroke-width="1.100"/><g fill="#3b78c0"><rect x="1" y="1" width="1.800" height="1.800"/><rect x="13.300" y="1" width="1.800" height="1.800"/><rect x="1" y="6.300" width="1.800" height="1.800"/><circle cx="7.800" cy="4.400" r="2.200"/></g><rect x="8.300" y="5.300" width="9" height="4.500" fill="#fff"/><g fill="#e6bb6e"><ellipse cx="12.700" cy="7.300" rx="3.700" ry="1.500"/><rect x="9.300" y="9.300" width="6.900" height=".9"/><rect x="10.500" y="10.800" width="5.700" height=".9"/><rect x="11.500" y="12.300" width="4" height=".9"/><ellipse cx="7.500" cy="12.400" rx="3.600" ry="1.500"/><rect x="4" y="14.400" width="7" height=".9"/><rect x="5" y="15.800" width="5" height=".9"/></g></svg>
<svg class="a" style="left:451px;top:146px" width="5" height="3" viewBox="0 0 5 3"><path d="M0 0h5L2.500 3z" fill="#666"/></svg>
<div class="t" style="left:465.0px;top:141.00px;font-size:15px;color:#444;transform:scaleX(0.9368);">%</div>
<div class="t" style="left:490.0px;top:134.81px;font-size:17px;color:#444;font-weight:bold;font-family:'Liberation Serif',sans-serif;">,</div>
<svg class="a" style="left:507px;top:140px" width="15" height="15" viewBox="0 0 15 15"><rect x="0.500" y="0.500" width="14" height="14" fill="#fff" stroke="#666"/><path d="M0.500 3.500h14M0.500 11.500h14M7.500 0.500v3M7.500 11.500v3" stroke="#666" fill="none"/><path d="M3 7.500h9" fill="none" stroke="#3b78c0" stroke-width="1"/><path d="M1.800 7.500L4.300 5.700V9.300zM13.200 7.500L10.700 5.700V9.300z" fill="#3b78c0"/></svg>
<div class="t" style="left:278.5px;top:163.87px;font-size:12.5px;color:#444;transform:scaleX(0.8415);font-weight:bold;">B</div>
<svg class="a" style="left:300.5px;top:167px" width="8" height="9" viewBox="0 0 8 9"><path d="M5.800 0.600L3.200 8.400M3.600 0.600h4M1 8.400h4" fill="none" stroke="#4a4a4a" stroke-width="1.500"/></svg>
<svg class="a" style="left:320px;top:167px" width="14" height="12" viewBox="0 0 14 12"><g fill="#6b6b6b"><rect x="0" y="0" width="14" height="1"/><rect x="2.5" y="3" width="9" height="1"/><rect x="0" y="6" width="14" height="1"/><rect x="2.5" y="9" width="9" height="1"/></g></svg>
<svg class="a" style="left:341px;top:164px" width="17" height="16" viewBox="0 0 17 16"><path d="M12.300 4.200c2.800.8 4.300 3.800 3.300 7.600h-2.800c1-2.500.6-5-.5-7.600z" fill="#3b78c0"/><path d="M7.600 2.300L2.200 6.900l5.600 5.300 5.800-5z" fill="#fff" stroke="#555" stroke-width="1.100" stroke-linejoin="round"/><path d="M8.300 6.500V2.300a1.600 1.600 0 0 0-3.200 0v2" fill="none" stroke="#555" stroke-width="1"/><rect x="0" y="12" width="16" height="4" fill="#ffff00"/></svg>
<svg class="a" style="left:363px;top:170px" width="5" height="3" viewBox="0 0 5 3"><path d="M0 0h5L2.500 3z" fill="#666"/></svg>
<svg class="a" style="left:375px;top:166px" width="16" height="14" viewBox="0 0 16 14"><rect x="0" y="10" width="16" height="4" fill="#f00"/></svg>
<div class="t" style="left:377.9px;top:163.52px;font-size:13.5px;color:#505050;transform:scaleX(1.1314);">A</div>
<svg class="a" style="left:397.5px;top:170px" width="5" height="3" viewBox="0 0 5 3"><path d="M0 0h5L2.500 3z" fill="#666"/></svg>
<svg class="a" style="left:410px;top:164.5px" width="13" height="13" viewBox="0 0 13 13"><g fill="#777"><rect x="0" y="0" width="1" height="1"/><rect x="0" y="12" width="1" height="1"/><rect x="0" y="0" width="1" height="1"/><rect x="12" y="0" width="1" height="1"/><rect x="6" y="0" width="1" height="1"/><rect x="0" y="6" width="1" height="1"/><rect x="2" y="0" width="1" height="1"/><rect x="2" y="12" width="1" height="1"/><rect x="0" y="2" width="1" height="1"/><rect x="12" y="2" width="1" height="1"/><rect x="6" y="2" width="1" height="1"/><rect x="2" y="6" width="1" height="1"/><rect x="4" y="0" width="1" height="1"/><rect x="4" y="12" width="1" height="1"/><rect x="0" y="4" width="1" height="1"/><rect x="12" y="4" width="1" height="1"/><rect x="6" y="4" width="1" height="1"/><rect x="4" y="6" width="1" height="1"/><rect x="6" y="0" width="1" height="1"/><rect x="6" y="12" width="1" height="1"/><rect x="0" y="6" width="1" height="1"/><rect x="12" y="6" width="1" height="1"/><rect x="6" y="6" width="1" height="1"/><rect x="6" y="6" width="1" height="1"/><rect x="8" y="0" width="1" height="1"/><rect x="8" y="12" width="1" height="1"/><rect x="0" y="8" width="1" height="1"/><rect x="12" y="8" width="1" height="1"/><rect x="6" y="8" width="1" height="1"/><rect x="8" y="6" width="1" height="1"/><rect x="10" y="0" width="1" height="1"/><rect x="10" y="12" width="1" height="1"/><rect x="0" y="10" width="1" height="1"/><rect x="12" y="10" width="1" height="1"/><rect x="6" y="10" width="1" height="1"/><rect x="10" y="6" width="1" height="1"/><rect x="12" y="0" width="1" height="1"/><rect x="12" y="12" width="1" height="1"/><rect x="0" y="12" width="1" height="1"/><rect x="12" y="12" width="1" height="1"/><rect x="6" y="12" width="1" height="1"/><rect x="12" y="6" width="1" height="1"/></g><rect x="0" y="12" width="13" height="1" fill="#555"/></svg>
<svg class="a" style="left:431px;top:170px" width="5" height="3" viewBox="0 0 5 3"><path d="M0 0h5L2.500 3z" fill="#666"/></svg>
<svg class="a" style="left:443px;top:165px" width="15" height="13" viewBox="0 0 15 13"><path d="M0.500 3.500h6M3 1L0.500 3.500 3 6" fill="none" stroke="#3b78c0" stroke-width="1.300"/><text x="7.500" y="6" font-size="8.500" font-family="Liberation Sans" fill="#444">.0</text><text x="3" y="13.300" font-size="8.500" font-family="Liberation Sans" fill="#444">.00</text></svg>
<svg class="a" style="left:465px;top:165px" width="15" height="13" viewBox="0 0 15 13"><text x="2.500" y="6" font-size="8.500" font-family="Liberation Sans" fill="#444">.00</text><path d="M0.500 10.500h6M4 8l2.500 2.500L4 13" fill="none" stroke="#3b78c0" stroke-width="1.300"/><text x="7.500" y="13.300" font-size="8.500" font-family="Liberation Sans" fill="#444">.0</text></svg>
<svg class="a" style="left:487px;top:164px" width="17" height="16" viewBox="0 0 17 16"><path d="M0 7.400L4.600 5.100 11 11 7 15.400z" fill="#e8bf78"/><path d="M5.900 4.400L8.500 2.700 14.200 7.900 11.700 10.100z" fill="#6a6a6a"/><path d="M11.200 3.500L14.100 0.800 16.200 2.600 13.400 5.700z" fill="#6a6a6a"/></svg>
<div class="a" style="left:268px;top:203px;width:211px;height:440px;background:#fff;border:1px solid #c6c6c6;box-shadow:1px 1px 4px rgba(0,0,0,.2)"></div>
<svg class="a" style="left:274px;top:209px" width="16" height="16" viewBox="0 0 16 16"><path d="M3.300 0.500L10.400 10M12.300 0.500L5.200 10" stroke="#5e5e5e" stroke-width="1.900" fill="none" stroke-linecap="butt"/><circle cx="3.900" cy="12" r="2.200" fill="none" stroke="#3b78c0" stroke-width="1.200"/><circle cx="11.900" cy="12" r="2.200" fill="none" stroke="#3b78c0" stroke-width="1.200"/></svg>
<div class="t" style="left:302.0px;top:209.04px;font-size:12px;color:#4c4c4c;transform:scaleX(0.9793);">Cu<u>t</u></div>
<svg class="a" style="left:274px;top:234px" width="16" height="15" viewBox="0 0 16 15"><path d="M0.500 0.500h4.500l2 2v8h-6.500z" fill="#fff" stroke="#666" stroke-width="1"/><path d="M5 0.500v2h2" fill="none" stroke="#666" stroke-width="1"/><path d="M2 3.500h1.500M2 5.500h2.500M2 7.500h2.500" stroke="#3b78c0" stroke-width="1"/><path d="M6.500 3.500h5l3 3v7h-8z" fill="#fff" stroke="#666" stroke-width="1"/><path d="M11.500 3.500v3h3" fill="none" stroke="#666" stroke-width="1"/><path d="M8.500 7.500h2M8.500 9.500h4M8.500 11.500h4" stroke="#3b78c0" stroke-width="1"/></svg>
<div class="t" style="left:302.0px;top:233.04px;font-size:12px;color:#4c4c4c;transform:scaleX(0.9780);"><u>C</u>opy</div>
<div class="a" style="left:294px;top:253px;width:184px;height:22px;background:#e6e6e6;"></div>
<svg class="a" style="left:274.5px;top:255.5px" width="16" height="16" viewBox="0 0 16 16"><rect x="0.500" y="2.500" width="12" height="12.500" rx="0.800" fill="#e9c37c"/><path d="M3 4.500V3h2V1.800a1 1 0 0 1 1-1h1a1 1 0 0 1 1 1V3h2v1.500z" fill="#6b6b6b"/><path d="M8.500 8.500h4l2.500 2.500v4.500h-6.500z" fill="#fff" stroke="#6b6b6b" stroke-width="1"/></svg>
<div class="t" style="left:303.0px;top:256.04px;font-size:12px;color:#666;transform:scaleX(0.9328);font-weight:bold;">Paste Options:</div>
<svg class="a" style="left:299.7px;top:277.7px" width="22" height="25" viewBox="0 0 22 25"><rect x="0.200" y="4" width="18" height="18.200" rx="1" fill="#e9c37c"/><path d="M3.800 7.200V3.600h3.500V2.600a1.600 1.600 0 0 1 1.600-1.600h2a1.600 1.600 0 0 1 1.600 1.600V3.600h3.500V7.200z" fill="#666"/><rect x="8.700" y="2.100" width="2.400" height="1.300" fill="#fff"/><path d="M10.700 11h6.800l3.500 3.500v9.200h-10.300z" fill="#fff" stroke="#666" stroke-width="1.200"/><path d="M17.500 11v3.500h3.500" fill="none" stroke="#666" stroke-width="1"/></svg>
<div class="t" style="left:302.0px;top:309.04px;font-size:12px;color:#4c4c4c;transform:scaleX(0.9114);">Paste <u>S</u>pecial...</div>
<div class="a" style="left:302px;top:329px;width:176px;height:1px;background:#e1e1e1;"></div>
<svg class="a" style="left:274px;top:335.5px" width="17" height="16" viewBox="0 0 17 16"><circle cx="10.300" cy="6" r="5" fill="#fff" stroke="#3b78c0" stroke-width="1.800"/><path d="M6.300 10L1.200 14.800" stroke="#3b78c0" stroke-width="2.300" stroke-linecap="round"/><rect x="9.600" y="5.300" width="1.500" height="3.500" fill="#444"/><rect x="9.600" y="3" width="1.500" height="1.500" fill="#444"/></svg>
<div class="t" style="left:302.0px;top:335.04px;font-size:12px;color:#4c4c4c;transform:scaleX(0.9770);">Smart <u>L</u>ookup</div>
<div class="a" style="left:302px;top:355px;width:176px;height:1px;background:#e1e1e1;"></div>
<div class="t" style="left:302.0px;top:361.04px;font-size:12px;color:#4c4c4c;transform:scaleX(0.9296);"><u>I</u>nsert...</div>
<div class="t" style="left:302.0px;top:385.04px;font-size:12px;color:#4c4c4c;transform:scaleX(0.9172);"><u>D</u>elete...</div>
<div class="t" style="left:302.0px;top:409.04px;font-size:12px;color:#4c4c4c;transform:scaleX(0.9657);">Clear Co<u>n</u>tents</div>
<div class="a" style="left:302px;top:429px;width:176px;height:1px;background:#e1e1e1;"></div>
<svg class="a" style="left:274.5px;top:435px" width="15" height="15" viewBox="0 0 15 15"><path d="M5 1.600H14V14.400H1.200V11.500" fill="#f6f4f6" stroke="#aaa7aa" stroke-width="1"/><rect x="5" y="1.100" width="9.500" height="2" fill="#aaa7aa"/><g fill="#aaa7aa"><rect x="5.500" y="5.300" width="4" height="1.400"/><rect x="4.500" y="8.300" width="7.500" height="1.500"/><rect x="4.500" y="11.300" width="6" height="1.500"/></g><path d="M3 0.200h3.300L4.300 4h2.500L0.500 11.500 2 6H-0.200z" fill="#d6d3d6"/></svg>
<div class="t" style="left:302.0px;top:435.04px;font-size:12px;color:#ababab;transform:scaleX(0.9791);"><u>Q</u>uick Analysis</div>
<div class="t" style="left:302.0px;top:459.04px;font-size:12px;color:#4c4c4c;transform:scaleX(0.9598);">Filt<u>e</u>r</div>
<svg class="a" style="left:464.5px;top:462.5px" width="4" height="7" viewBox="0 0 4 7"><path d="M0 0v7l4-3.500z" fill="#666"/></svg>
<div class="t" style="left:302.0px;top:483.04px;font-size:12px;color:#4c4c4c;transform:scaleX(0.9266);">S<u>o</u>rt</div>
<svg class="a" style="left:464.5px;top:486.5px" width="4" height="7" viewBox="0 0 4 7"><path d="M0 0v7l4-3.500z" fill="#666"/></svg>
<div class="a" style="left:302px;top:503px;width:176px;height:1px;background:#e1e1e1;"></div>
<svg class="a" style="left:274px;top:509px" width="16" height="16" viewBox="0 0 16 16"><rect x="0.500" y="0.500" width="15" height="15" fill="#fff" stroke="#808080"/><rect x="0" y="0" width="16" height="3.500" fill="#3b78c0"/><rect x="2.500" y="1.200" width="2.200" height="1" fill="#fff"/><rect x="7" y="1.200" width="2.200" height="1" fill="#fff"/><rect x="11.500" y="1.200" width="2.200" height="1" fill="#fff"/><path d="M0.500 6.500h15M0.500 9.500h15M0.500 12.500h15M5.500 3.500v12M10.500 3.500v12" stroke="#808080" fill="none"/></svg>
<div class="t" style="left:302.0px;top:509.04px;font-size:12px;color:#4c4c4c;transform:scaleX(0.9720);"><u>G</u>et Data from Table/Range...</div>
<div class="a" style="left:302px;top:529px;width:176px;height:1px;background:#e1e1e1;"></div>
<svg class="a" style="left:274px;top:535px" width="16" height="15" viewBox="0 0 16 15"><path d="M7 2h6.500a1.500 1.500 0 0 1 1.500 1.500v5.500a1.500 1.500 0 0 1-1.500 1.500H7.500L4.500 14v-3.500H3.500a1.500 1.500 0 0 1-1.500-1.500V7" fill="none" stroke="#666" stroke-width="1"/><path d="M3 0.500v6M0 3.500h6" stroke="#4a9a78" stroke-width="1.700" fill="none"/></svg>
<div class="t" style="left:302.0px;top:535.04px;font-size:12px;color:#4c4c4c;transform:scaleX(1.0005);">Insert Co<u>m</u>ment</div>
<div class="a" style="left:266px;top:553px;width:212px;height:30.5px;background:#e8131f;"></div>
<div class="a" style="left:271px;top:558px;width:202px;height:20.6px;background:#c6c6c6;"></div>
<svg class="a" style="left:275px;top:561px" width="14" height="16" viewBox="0 0 14 16"><rect x="0.500" y="0.500" width="13" height="15" fill="#fff" stroke="#666"/><rect x="0" y="0" width="14" height="3" fill="#3b78c0"/><circle cx="4.200" cy="6.500" r="1.200" fill="#555"/><circle cx="4.200" cy="11.500" r="1" fill="#fff" stroke="#555" stroke-width=".9"/><path d="M7 6.500h4M7 11.500h4" stroke="#555" stroke-width="1"/></svg>
<div class="t" style="left:302.0px;top:561.04px;font-size:12px;color:#262626;transform:scaleX(0.9511);"><u>F</u>ormat Cells...</div>
<div class="t" style="left:302.0px;top:585.04px;font-size:12px;color:#4c4c4c;transform:scaleX(0.9882);">Pic<u>k</u> From Drop-down List...</div>
<div class="t" style="left:302.0px;top:609.04px;font-size:12px;color:#4c4c4c;transform:scaleX(0.9619);">Define N<u>a</u>me...</div>
</body></html>
